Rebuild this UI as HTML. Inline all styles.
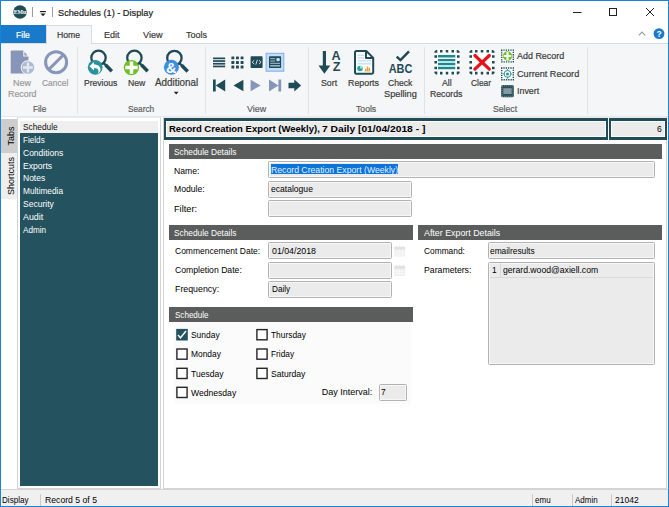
<!DOCTYPE html>
<html><head><meta charset="utf-8"><title>Schedules (1) - Display</title>
<style>
*{box-sizing:border-box;margin:0;padding:0}
html,body{width:669px;height:507px;overflow:hidden;background:#fff}
body{position:relative;font-family:"Liberation Sans",sans-serif;font-size:9px;color:#000}
.a{position:absolute}
.t{position:absolute;white-space:nowrap;line-height:14px;height:14px;transform-origin:0 50%}
.k{-webkit-text-stroke:0.2px}
.sep{position:absolute;width:1px;top:47px;height:67px;background:#e1e2e3}
.sh{position:absolute;height:15px;background:#5b5d5c}
.f{position:absolute;height:17px;background:#ebebeb;border:1px solid #b2b2b2;border-radius:1.5px;box-shadow:inset 0 0 0 1px #f7f7f7}
.cb{position:absolute;width:12px;height:12px;border:1px solid #2b2b2b;background:#fff}
.ss{position:absolute;top:494px;width:1px;height:12px;background:#c9c9c9}
svg{position:absolute;overflow:visible}
</style></head><body>
<!-- title bar -->
<svg style="left:12px;top:5px" width="16" height="16" viewBox="0 0 16 16"><circle cx="8" cy="7" r="6.800" fill="#1f4e57"/><text x="1.700" y="9.400" font-size="6.800" font-weight="bold" fill="#fff" font-family="Liberation Serif,serif" textLength="12.600" lengthAdjust="spacingAndGlyphs">EMu</text></svg>
<div class="a" style="left:32px;top:7px;width:1px;height:10px;background:#9a9a9a"></div>
<svg style="left:39px;top:10px" width="8" height="7" viewBox="0 0 8 7"><rect x="0.900" y="1" width="6" height="1.200" fill="#222"/><path d="M1.400 3.500h5.200L4 6.200z" fill="#222"/></svg>
<div class="a" style="left:52px;top:7px;width:1px;height:10px;background:#9a9a9a"></div>
<svg style="left:570px;top:6px" width="92" height="12" viewBox="0 0 92 12"><g stroke="#222" stroke-width="1" fill="none"><path d="M3 6.500h8.500"/><rect x="39.500" y="2.500" width="7" height="7"/><path d="M76 2l8 8M84 2l-8 8"/></g></svg>

<!-- tab row -->
<div class="a" style="left:1px;top:25px;width:45px;height:18px;background:#1979ca"></div>
<div class="a" style="left:1px;top:43px;width:667px;height:1px;background:#dadbdc"></div>
<div class="a" style="left:46px;top:25px;width:46px;height:19px;background:#f5f6f7;border:1px solid #dadbdc;border-bottom:none"></div>
<svg style="left:634px;top:27px" width="32" height="14" viewBox="0 0 32 14"><path d="M4.800 8.400l3.200-3.200l3.200 3.200" stroke="#9a9a9a" fill="none" stroke-width="1.200"/><circle cx="25" cy="6.600" r="5.400" fill="#1979ca"/><text x="25" y="9.800" font-size="8.500" font-weight="bold" fill="#fff" text-anchor="middle" font-family="Liberation Sans,sans-serif">?</text></svg>

<!-- ribbon -->
<div class="a" style="left:1px;top:44px;width:667px;height:72px;background:#f5f6f7"></div>
<div class="a" style="left:1px;top:115.500px;width:667px;height:1.500px;background:#e6e7e9"></div>
<div class="sep" style="left:77px"></div>
<div class="sep" style="left:205px"></div>
<div class="sep" style="left:308px"></div>
<div class="sep" style="left:424px"></div>
<div class="sep" style="left:587px"></div>
<!-- New Record (disabled) -->
<svg style="left:0;top:0" width="669" height="120" viewBox="0 0 669 120">
<g id="ic-newrec">
<path d="M11.300 50.500h12.100l5 5.900v17.200h-17.700v-22.500z" fill="#8796b8"/>
<path d="M23.300 50.200v6.300h5.500z" fill="#f5f6f7"/><path d="M24.400 52v3.400h3z" fill="#8796b8"/>
<circle cx="27.900" cy="67.500" r="7.200" fill="#f5f6f7"/>
<circle cx="27.900" cy="67.500" r="6.300" fill="#aeb8d0"/>
<path d="M27.900 62.500v10M22.900 67.500h10" stroke="#e4e8f0" stroke-width="2.400"/>
</g>
<g id="ic-cancel" fill="none" stroke="#8796b8">
<circle cx="56.100" cy="62.200" r="10.500" stroke-width="3"/>
<path d="M48.900 69.400l14.400-14.400" stroke-width="3"/>
</g>
<!-- Previous -->
<g id="ic-prev">
<circle cx="98.5" cy="57.8" r="7.200" fill="none" stroke="#1f4a56" stroke-width="2.300"/>
<path d="M103.5 62.9l3.200 3.200" stroke="#1f4a56" stroke-width="2.200"/><path d="M105.7 65.1l6.100 6.100" stroke="#1f4a56" stroke-width="3.500"/>
<circle cx="95.200" cy="67.300" r="7.400" fill="#2a929b"/>
<path d="M89.400 66.200l4.600-4.200v2.500c4.100 0 6.500 2.200 6.500 5.100c0 2.200-1.500 3.800-3.800 4.500c1.400-1.100 1.800-2 1.800-3.200c0-1.800-1.600-3-4.500-3v2.500z" fill="#fff"/>
</g>
<!-- New search -->
<g id="ic-newsearch">
<circle cx="134.4" cy="57.8" r="7.200" fill="none" stroke="#1f4a56" stroke-width="2.300"/>
<path d="M139.4 62.9l3.200 3.200" stroke="#1f4a56" stroke-width="2.200"/><path d="M141.6 65.1l6.100 6.100" stroke="#1f4a56" stroke-width="3.500"/>
<circle cx="131.400" cy="67.600" r="7.700" fill="#6cc024"/>
<path d="M131.500 61.400v12.400M125.300 67.600h12.400" stroke="#fff" stroke-width="3.500"/>
</g>
<!-- Additional -->
<g id="ic-addl">
<circle cx="174.4" cy="58" r="7.200" fill="none" stroke="#1f4a56" stroke-width="2.300"/>
<path d="M179.4 63.1l3.200 3.200" stroke="#1f4a56" stroke-width="2.200"/><path d="M181.6 65.3l6.100 6.100" stroke="#1f4a56" stroke-width="3.500"/>
<circle cx="171.400" cy="67.300" r="7.500" fill="#3d8ee0"/>
<text x="171.300" y="72.600" font-size="14.500" font-weight="bold" fill="#fff" text-anchor="middle" font-family="Liberation Sans,sans-serif">&amp;</text>
<path d="M173.800 91.700h4.800l-2.400 2.700z" fill="#222"/>
</g>
<!-- View row 1 -->
<g id="ic-view1" fill="#1f4a56">
<rect x="213" y="57.500" width="12.200" height="1.700"/><rect x="213" y="60.200" width="12.200" height="1.700"/><rect x="213" y="62.900" width="12.200" height="1.700"/><rect x="213" y="65.600" width="12.200" height="1.700"/>
<g>
<rect x="231.400" y="56.400" width="2.900" height="2.900" rx="0.500"/><rect x="236" y="56.400" width="2.900" height="2.900" rx="0.500"/><rect x="240.600" y="56.400" width="2.900" height="2.900" rx="0.500"/>
<rect x="231.400" y="61" width="2.900" height="2.900" rx="0.500"/><rect x="236" y="61" width="2.900" height="2.900" rx="0.500"/><rect x="240.600" y="61" width="2.900" height="2.900" rx="0.500"/>
<rect x="231.400" y="65.600" width="2.900" height="2.900" rx="0.500"/><rect x="236" y="65.600" width="2.900" height="2.900" rx="0.500"/><rect x="240.600" y="65.600" width="2.900" height="2.900" rx="0.500"/>
</g>
<rect x="250.600" y="56.300" width="12" height="11.800" rx="0.800"/>
<path d="M254.200 60.300l-2 1.900l2 1.900M259 60.300l2 1.900l-2 1.900M257.400 59.800l-1.600 4.800" stroke="#e6ecee" stroke-width="0.900" fill="none"/>
<rect x="266.100" y="53.300" width="17.700" height="17.900" fill="#c3dcf8" stroke="#7fb0ea" stroke-width="1"/>
<rect x="269" y="56.300" width="12.100" height="11.800" rx="0.800"/>
<path d="M270.200 58.700h5M270.200 61h5M270.200 63.300h9.800" stroke="#b8cfe6" stroke-width="0.900"/><path d="M270.200 65.800h9.800" stroke="#9fb8cc" stroke-width="1.500"/>
<rect x="276.300" y="58" width="3.500" height="3.200" rx="1.200" fill="#c3dcf8"/>
</g>
<!-- View row 2 -->
<g id="ic-view2">
<path d="M213 79.500h2.700v12h-2.700zM225.200 79.500v12l-9.500-6z" fill="#1f4a56"/>
<path d="M243.400 79.800v11.400l-9.900-5.700z" fill="#1f4a56"/>
<path d="M250.600 79.800v11.400l10.100-5.700z" fill="#8796b8"/>
<path d="M269 79.500v12l9.400-6zM278.400 79.500h2.800v12h-2.800z" fill="#8796b8"/>
<path d="M288.500 82.800h5.800v-3.300l6.800 6l-6.800 6v-3.300h-5.800z" fill="#1f4a56"/>
</g>
<!-- Sort -->
<g id="ic-sort" fill="#1f4a56">
<path d="M322.800 51h3.200v14.500h4.300l-5.900 8.200l-5.900-8.200h4.300z"/>
<text x="336.100" y="60.100" font-size="12.600" font-weight="bold" text-anchor="middle" font-family="Liberation Sans,sans-serif">A</text>
<text x="336.600" y="71.400" font-size="12.600" font-weight="bold" text-anchor="middle" font-family="Liberation Sans,sans-serif">Z</text>
</g>
<!-- Reports -->
<g id="ic-reports">
<path d="M356.500 51h9.800l6.900 6.900v14.300a1.500 1.500 0 0 1-1.500 1.500h-15.200a1.500 1.500 0 0 1-1.500-1.500v-19.700a1.500 1.500 0 0 1 1.500-1.500z" fill="#fff" stroke="#1f4a56" stroke-width="2" stroke-linejoin="round"/>
<path d="M366 51v7h7" fill="none" stroke="#1f4a56" stroke-width="2" stroke-linejoin="round"/>
<path d="M357.500 55.200h6.800M357.500 58h6.800M357.500 60.800h13.700M357.500 63.600h13.700" stroke="#cfe2f5" stroke-width="1.600"/>
<circle cx="360" cy="68.500" r="2.800" fill="#27a59a"/><path d="M360 68.500v-2.800a2.800 2.800 0 0 1 2.800 2.800z" fill="#9fe0d6"/>
<path d="M365 71v-2.200h1.400v2.200M366.800 71v-4.600h1.400v4.600M368.600 71v-3.200h1.400v3.200" fill="#e9a23b"/><rect x="364.600" y="70.600" width="5.800" height="0.800" fill="#e9a23b"/>
</g>
<!-- Check spelling -->
<g id="ic-spell">
<path d="M396.700 56.600l3.800 3.500l8.500-8.700" fill="none" stroke="#1f4a56" stroke-width="2.500"/>
<text x="400.500" y="73.300" font-size="12" font-weight="bold" fill="#1f4a56" text-anchor="middle" font-family="Liberation Sans,sans-serif" textLength="23.600" lengthAdjust="spacingAndGlyphs">ABC</text>
</g>
<!-- All records -->
<g id="ic-all">
<rect x="434.1" y="49.5" width="25.8" height="25.4" rx="3" fill="#fff"/><path d="M440.00 49.90h2.5v2.7h-2.5zM440.00 71.80h2.5v2.7h-2.5zM445.75 49.90h2.5v2.7h-2.5zM445.75 71.80h2.5v2.7h-2.5zM451.50 49.90h2.5v2.7h-2.5zM451.50 71.80h2.5v2.7h-2.5zM434.40 55.25h2.6v2.5h-2.6zM457.00 55.25h2.6v2.5h-2.6zM434.40 60.95h2.6v2.5h-2.6zM457.00 60.95h2.6v2.5h-2.6zM434.40 66.65h2.6v2.5h-2.6zM457.00 66.65h2.6v2.5h-2.6zM436.00 49.90H437.30V52.80H434.40V51.50zM458.00 49.90H456.70V52.80H459.60V51.50zM436.00 74.50H437.30V71.60H434.40V72.90zM458.00 74.50H456.70V71.60H459.60V72.90z" fill="#1f4a56"/>
<path d="M438 56.300h17.300M438 60.100h17.300M438 64h17.300M438 68h17.300" stroke="#1a8a90" stroke-width="2.400"/>
</g>
<g id="ic-clear">
<rect x="469.1" y="49.5" width="25.8" height="25.4" rx="3" fill="#fff"/><path d="M475.00 49.90h2.5v2.7h-2.5zM475.00 71.80h2.5v2.7h-2.5zM480.75 49.90h2.5v2.7h-2.5zM480.75 71.80h2.5v2.7h-2.5zM486.50 49.90h2.5v2.7h-2.5zM486.50 71.80h2.5v2.7h-2.5zM469.40 55.25h2.6v2.5h-2.6zM492.00 55.25h2.6v2.5h-2.6zM469.40 60.95h2.6v2.5h-2.6zM492.00 60.95h2.6v2.5h-2.6zM469.40 66.65h2.6v2.5h-2.6zM492.00 66.65h2.6v2.5h-2.6zM471.00 49.90H472.30V52.80H469.40V51.50zM493.00 49.90H491.70V52.80H494.60V51.50zM471.00 74.50H472.30V71.60H469.40V72.90zM493.00 74.50H491.70V71.60H494.60V72.90z" fill="#1f4a56"/>
<path d="M474.900 55.500l14.400 13.600M489.300 55.500l-14.400 13.600" stroke="#e8111a" stroke-width="3.200" stroke-linecap="round"/>
</g>
<!-- small icons -->
<g id="ic-small">
<rect x="501.700" y="50.100" width="11.600" height="11.800" fill="#fff" stroke="#1f4a56" stroke-width="1.400" stroke-dasharray="1.300 1.020" stroke-dashoffset="0.650"/>
<circle cx="507.500" cy="56" r="4.700" fill="#6cc024"/><path d="M507.500 52.100v7.800M503.600 56h7.800" stroke="#fff" stroke-width="2.200"/>
<rect x="501.700" y="68" width="11.600" height="11.800" fill="#fff" stroke="#1f4a56" stroke-width="1.400" stroke-dasharray="1.300 1.020" stroke-dashoffset="0.650"/>
<circle cx="507.500" cy="73.900" r="3.400" fill="none" stroke="#2a929b" stroke-width="1"/><circle cx="507.500" cy="73.900" r="1.500" fill="#2a929b"/><path d="M507.500 69.100v2M507.500 76.700v2M502.700 73.900h2M510.300 73.900h2" stroke="#2a929b" stroke-width="0.900"/>
<rect x="501.100" y="84.900" width="12.800" height="12.300" rx="1.500" fill="#2a4f5a"/>
<rect x="503.300" y="88.200" width="8.400" height="5.800" fill="#8499a1"/>
<rect x="502" y="85.800" width="11" height="10.500" fill="none" stroke="#9db0b7" stroke-width="0.800" stroke-dasharray="1 1.100"/>
</g>
</svg>


<!-- side tabs -->
<div class="a" style="left:1px;top:119px;width:16px;height:34px;background:#cdcdcd"></div>
<div class="a" style="left:1px;top:153px;width:16px;height:46px;background:#efefef"></div>
<div class="a" style="left:1px;top:199px;width:16px;height:290px;background:#fff"></div>
<div class="t" style="left:10.500px;top:135.500px;font-size:9px;width:0;height:0;line-height:0"><div style="position:absolute;transform:translate(-50%,-50%) rotate(-90deg);white-space:nowrap;line-height:12px">Tabs</div></div>
<div class="t" style="left:10.500px;top:176.300px;font-size:9px;width:0;height:0;line-height:0"><div style="position:absolute;transform:translate(-50%,-50%) rotate(-90deg);white-space:nowrap;line-height:12px">Shortcuts</div></div>

<!-- left panel -->
<div class="a" style="left:17px;top:117px;width:144px;height:372px;background:#fff;border:1px solid #d4d4d4;border-top-color:#ececec"></div>
<div class="a" style="left:20px;top:121px;width:137.600px;height:364.600px;background:#25525f"></div>
<div class="a" style="left:20px;top:121px;width:137.600px;height:12.400px;background:#efefef"></div>

<!-- right panel -->
<div class="a" style="left:163px;top:117px;width:504px;height:372px;background:#fff;border:1px solid #d4d4d4;border-top-color:#ececec"></div>
<div class="a" style="left:164px;top:118.200px;width:444.300px;height:21.500px;background:#1f4c58"></div>
<div class="a" style="left:166.400px;top:120.700px;width:439.600px;height:16.500px;background:#fff"></div>
<div class="a" style="left:167.400px;top:121.700px;width:437.600px;height:14.500px;background:#ebebeb"></div>
<div class="a" style="left:609px;top:118.200px;width:58px;height:21.500px;background:#1f4c58"></div>
<div class="a" style="left:611.400px;top:120.700px;width:53.200px;height:16.500px;background:#fff"></div>
<div class="a" style="left:612.400px;top:121.700px;width:51.200px;height:14.500px;background:#ebebeb"></div>

<div class="sh" style="left:169px;top:144px;width:493px"></div>
<div class="f" style="left:268px;top:161px;width:387px"></div>
<div class="a" style="left:270.500px;top:164px;width:127.500px;height:10px;background:#0a74d9"></div>
<div class="f" style="left:268px;top:181px;width:144px"></div>
<div class="f" style="left:268px;top:200px;width:144px"></div>

<div class="sh" style="left:169px;top:225px;width:244px"></div>
<div class="f" style="left:268px;top:242px;width:124px"></div>
<div class="f" style="left:268px;top:261.500px;width:124px"></div>
<div class="f" style="left:268px;top:281px;width:124px"></div>
<svg style="left:0;top:0" width="669" height="507" viewBox="0 0 669 507">
<g><rect x="394.200" y="247" width="11" height="9.600" rx="0.800" fill="#eeeeee"/><rect x="394.200" y="247" width="11" height="2.400" fill="#e2e2e2"/><path d="M396.500 245.800v2.400M399.700 245.800v2.400M402.900 245.800v2.400" stroke="#e0e0e0" stroke-width="1.200"/><path d="M397 249.600v6.800M399.700 249.600v6.800M402.400 249.600v6.800M394.500 252h10.400M394.500 254.300h10.400" stroke="#fafafa" stroke-width="0.800"/></g>
<g transform="translate(0 19.300)"><rect x="394.200" y="247" width="11" height="9.600" rx="0.800" fill="#eeeeee"/><rect x="394.200" y="247" width="11" height="2.400" fill="#e2e2e2"/><path d="M396.500 245.800v2.400M399.700 245.800v2.400M402.900 245.800v2.400" stroke="#e0e0e0" stroke-width="1.200"/><path d="M397 249.600v6.800M399.700 249.600v6.800M402.400 249.600v6.800M394.500 252h10.400M394.500 254.300h10.400" stroke="#fafafa" stroke-width="0.800"/></g>
</svg>


<div class="sh" style="left:169px;top:307px;width:244px;height:15px"></div>
<div class="a" style="left:174px;top:322px;width:237px;height:82px;background:#fbfbfb"></div>
<svg style="left:0;top:0" width="669" height="507" viewBox="0 0 669 507"><g fill="#fff" stroke="#262626" stroke-width="1.400"><rect x="176.9" y="349.0" width="10.200" height="10.200"/><rect x="176.9" y="368.3" width="10.200" height="10.200"/><rect x="176.9" y="387.3" width="10.200" height="10.200"/><rect x="256.9" y="329.6" width="10.200" height="10.200"/><rect x="256.9" y="349.0" width="10.200" height="10.200"/><rect x="256.9" y="368.3" width="10.200" height="10.200"/></g><rect x="176.200" y="328.900" width="11.600" height="11.600" fill="#25525f"/><path d="M178 335l2.500 2.800l5.500-6.800" stroke="#fff" stroke-width="1.400" fill="none"/></svg>
<div class="f" style="left:378.500px;top:384px;width:28.500px;height:16.800px"></div>

<div class="sh" style="left:418px;top:225px;width:244px"></div>
<div class="f" style="left:488px;top:242px;width:167px"></div>
<div class="f" style="left:488px;top:261.500px;width:167px;height:103px"></div>
<div class="a" style="left:490px;top:277px;width:163px;height:1px;background:#d9d9d9"></div>
<div class="a" style="left:500px;top:263px;width:1px;height:14px;background:#d9d9d9"></div>

<!-- status bar -->
<div class="a" style="left:1px;top:489px;width:667px;height:17px;background:#f0f0f0;border-top:1px solid #d4d4d4"></div>
<div class="ss" style="left:40px"></div>
<div class="ss" style="left:532px"></div>
<div class="ss" style="left:572px"></div>
<div class="ss" style="left:611px"></div>

<div class="t k" style="top:6.03px;font-size:9.4px;color:#222;left:58.30px;transform:scaleX(0.9802);">Schedules (1) - Display</div>
<div class="t k" style="top:27.73px;font-size:9.3px;color:#fff;left:16.30px;transform:scaleX(0.9276);">File</div>
<div class="t k" style="top:27.73px;font-size:9.3px;color:#3a3a3a;left:57.30px;transform:scaleX(0.9310);">Home</div>
<div class="t k" style="top:27.73px;font-size:9.3px;color:#3a3a3a;left:104.30px;transform:scaleX(0.9669);">Edit</div>
<div class="t k" style="top:27.73px;font-size:9.3px;color:#3a3a3a;left:143.20px;transform:scaleX(0.9808);">View</div>
<div class="t k" style="top:27.73px;font-size:9.3px;color:#3a3a3a;left:186.00px;transform:scaleX(0.9676);">Tools</div>
<div class="t k" style="top:76.43px;font-size:9.6px;color:#9a9a9a;left:13.00px;transform:scaleX(0.9373);">New</div>
<div class="t k" style="top:86.93px;font-size:9.6px;color:#9a9a9a;left:7.50px;transform:scaleX(0.9212);">Record</div>
<div class="t k" style="top:76.43px;font-size:9.6px;color:#9a9a9a;left:42.00px;transform:scaleX(0.8803);">Cancel</div>
<div class="t k" style="top:76.43px;font-size:9.6px;color:#3a3a3a;left:83.70px;transform:scaleX(0.8921);">Previous</div>
<div class="t k" style="top:76.43px;font-size:9.6px;color:#3a3a3a;left:127.60px;transform:scaleX(0.9061);">New</div>
<div class="t k" style="top:76.43px;font-size:10px;color:#3a3a3a;left:155.00px;transform:scaleX(0.9836);">Additional</div>
<div class="t k" style="top:76.43px;font-size:9.6px;color:#3a3a3a;left:320.90px;transform:scaleX(0.9143);">Sort</div>
<div class="t k" style="top:76.43px;font-size:9.6px;color:#3a3a3a;left:348.00px;transform:scaleX(0.9228);">Reports</div>
<div class="t k" style="top:76.43px;font-size:9.6px;color:#3a3a3a;left:388.00px;transform:scaleX(0.8933);">Check</div>
<div class="t k" style="top:86.93px;font-size:9.6px;color:#3a3a3a;left:384.00px;transform:scaleX(0.9607);">Spelling</div>
<div class="t k" style="top:76.43px;font-size:9.6px;color:#3a3a3a;left:441.60px;transform:scaleX(0.9089);">All</div>
<div class="t k" style="top:86.93px;font-size:9.6px;color:#3a3a3a;left:430.00px;transform:scaleX(0.9067);">Records</div>
<div class="t k" style="top:76.43px;font-size:9.6px;color:#3a3a3a;left:471.40px;transform:scaleX(0.8763);">Clear</div>
<div class="t k" style="top:49.13px;font-size:9.6px;color:#3a3a3a;left:516.80px;transform:scaleX(0.9315);">Add Record</div>
<div class="t k" style="top:66.63px;font-size:9.6px;color:#3a3a3a;left:516.80px;transform:scaleX(0.9483);">Current Record</div>
<div class="t k" style="top:84.13px;font-size:9.6px;color:#3a3a3a;left:516.80px;transform:scaleX(0.9250);">Invert</div>
<div class="t k" style="top:102.33px;font-size:9.6px;color:#5c5c5c;left:32.70px;transform:scaleX(0.8598);">File</div>
<div class="t k" style="top:102.33px;font-size:9.6px;color:#5c5c5c;left:127.60px;transform:scaleX(0.8617);">Search</div>
<div class="t k" style="top:102.33px;font-size:9.6px;color:#5c5c5c;left:246.70px;transform:scaleX(0.9358);">View</div>
<div class="t k" style="top:102.33px;font-size:9.6px;color:#5c5c5c;left:355.80px;transform:scaleX(0.9015);">Tools</div>
<div class="t k" style="top:102.33px;font-size:9.6px;color:#5c5c5c;left:493.00px;transform:scaleX(0.9036);">Select</div>
<div class="t" style="top:120.22px;font-size:9px;color:#111;left:23.40px;transform:scaleX(0.9246);">Schedule</div>
<div class="t" style="top:133.12px;font-size:9px;color:#fff;left:23.40px;transform:scaleX(0.9036);">Fields</div>
<div class="t" style="top:146.02px;font-size:9px;color:#fff;left:23.40px;transform:scaleX(0.9452);">Conditions</div>
<div class="t" style="top:158.62px;font-size:9px;color:#fff;left:23.40px;transform:scaleX(0.9536);">Exports</div>
<div class="t" style="top:171.42px;font-size:9px;color:#fff;left:23.40px;transform:scaleX(0.9441);">Notes</div>
<div class="t" style="top:184.22px;font-size:9px;color:#fff;left:23.40px;transform:scaleX(0.9192);">Multimedia</div>
<div class="t" style="top:197.12px;font-size:9px;color:#fff;left:23.40px;transform:scaleX(0.9472);">Security</div>
<div class="t" style="top:209.92px;font-size:9px;color:#fff;left:23.40px;transform:scaleX(0.9846);">Audit</div>
<div class="t" style="top:222.72px;font-size:9px;color:#fff;left:23.40px;transform:scaleX(0.9014);">Admin</div>
<div class="t" style="top:121.72px;font-size:9.2px;color:#000;font-weight:bold;left:168.60px;transform:scaleX(1.0340);">Record Creation Export (Weekly),</div>
<div class="t" style="top:121.72px;font-size:9.2px;color:#000;font-weight:bold;left:322.40px;transform:scaleX(1.1184);">7 Daily [01/04/2018 - ]</div>
<div class="t" style="top:121.72px;font-size:9.2px;color:#000;left:657.03px;transform:scaleX(0.9300);">6</div>
<div class="t" style="top:145.12px;font-size:9px;color:#fff;left:174.20px;transform:scaleX(0.9238);">Schedule Details</div>
<div class="t" style="top:163.72px;font-size:9px;color:#000;left:174.00px;transform:scaleX(0.9579);">Name:</div>
<div class="t" style="top:182.32px;font-size:9px;color:#000;left:174.00px;transform:scaleX(0.9584);">Module:</div>
<div class="t" style="top:201.82px;font-size:9px;color:#000;left:174.00px;transform:scaleX(1.0222);">Filter:</div>
<div class="t" style="top:162.72px;font-size:9px;color:#e8f1fb;left:270.80px;transform:scaleX(0.9637);">Record Creation Export (Weekly)</div>
<div class="t" style="top:182.12px;font-size:9px;color:#000;left:270.80px;transform:scaleX(0.9513);">ecatalogue</div>
<div class="t" style="top:225.72px;font-size:9px;color:#fff;left:174.20px;transform:scaleX(0.9238);">Schedule Details</div>
<div class="t" style="top:243.82px;font-size:9px;color:#000;left:174.90px;transform:scaleX(0.9451);">Commencement Date:</div>
<div class="t" style="top:263.22px;font-size:9px;color:#000;left:174.90px;transform:scaleX(0.9605);">Completion Date:</div>
<div class="t" style="top:282.02px;font-size:9px;color:#000;left:174.90px;transform:scaleX(0.9793);">Frequency:</div>
<div class="t" style="top:243.72px;font-size:9px;color:#000;left:271.80px;transform:scaleX(0.9768);">01/04/2018</div>
<div class="t" style="top:281.72px;font-size:9px;color:#000;left:271.80px;transform:scaleX(0.9093);">Daily</div>
<div class="t" style="top:308.12px;font-size:9px;color:#fff;left:174.60px;transform:scaleX(0.8953);">Schedule</div>
<div class="t" style="top:328.12px;font-size:9px;color:#000;left:190.90px;transform:scaleX(0.9367);">Sunday</div>
<div class="t" style="top:347.32px;font-size:9px;color:#000;left:190.90px;transform:scaleX(0.9335);">Monday</div>
<div class="t" style="top:366.62px;font-size:9px;color:#000;left:190.90px;transform:scaleX(0.9477);">Tuesday</div>
<div class="t" style="top:386.02px;font-size:9px;color:#000;left:190.90px;transform:scaleX(0.9541);">Wednesday</div>
<div class="t" style="top:328.12px;font-size:9px;color:#000;left:271.30px;transform:scaleX(0.9299);">Thursday</div>
<div class="t" style="top:347.32px;font-size:9px;color:#000;left:271.30px;transform:scaleX(0.9234);">Friday</div>
<div class="t" style="top:366.62px;font-size:9px;color:#000;left:271.30px;transform:scaleX(0.9547);">Saturday</div>
<div class="t" style="top:385.32px;font-size:9px;color:#000;left:321.80px;">Day Interval:</div>
<div class="t" style="top:385.32px;font-size:9px;color:#000;left:380.70px;transform:scaleX(0.9300);">7</div>
<div class="t" style="top:225.72px;font-size:9px;color:#fff;left:423.80px;transform:scaleX(0.9828);">After Export Details</div>
<div class="t" style="top:243.82px;font-size:9px;color:#000;left:423.60px;transform:scaleX(0.9292);">Command:</div>
<div class="t" style="top:263.22px;font-size:9px;color:#000;left:423.60px;transform:scaleX(0.9667);">Parameters:</div>
<div class="t" style="top:243.72px;font-size:9px;color:#000;left:490.40px;transform:scaleX(0.9289);">emailresults</div>
<div class="t" style="top:263.42px;font-size:9px;color:#000;left:492.20px;transform:scaleX(0.9300);">1</div>
<div class="t" style="top:263.42px;font-size:9px;color:#000;left:502.60px;transform:scaleX(0.9598);">gerard.wood@axiell.com</div>
<div class="t" style="top:492.52px;font-size:9px;color:#000;left:1.50px;transform:scaleX(0.8978);">Display</div>
<div class="t" style="top:492.52px;font-size:9px;color:#000;left:45.20px;transform:scaleX(0.9624);">Record 5 of 5</div>
<div class="t" style="top:492.52px;font-size:9px;color:#000;left:534.90px;transform:scaleX(0.8906);">emu</div>
<div class="t" style="top:492.52px;font-size:9px;color:#000;left:574.60px;transform:scaleX(0.8857);">Admin</div>
<div class="t" style="top:492.52px;font-size:9px;color:#000;left:614.80px;transform:scaleX(0.9428);">21042</div>

<!-- window frame -->
<div class="a" style="left:0;top:0;width:669px;height:507px;border:1px solid #1883d7"></div>
</body></html>
